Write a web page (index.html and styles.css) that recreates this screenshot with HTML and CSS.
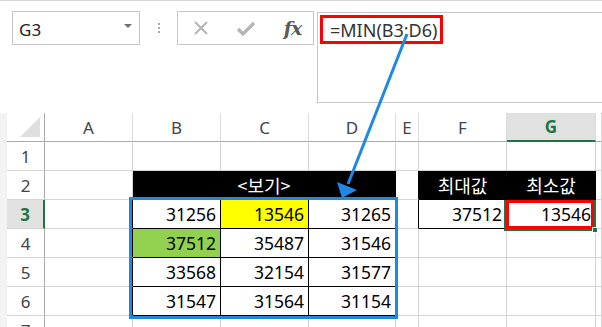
FILE: index.html
```html
<!DOCTYPE html>
<html lang="ko">
<head>
    <meta charset="UTF-8">
    <title>MIN 함수</title>
    <link rel="stylesheet" href="styles.css">
</head>
<body>
<div class="app">
    <div class="toolbar">
        <div class="namebox"><span class="name">G3</span><span class="caret"></span></div>
        <div class="grip"><i></i><i></i><i></i></div>
        <div class="fbtns">
            <span class="fbtn">
                <svg width="16" height="16" viewBox="0 0 16 16"><path d="M2 2 L14 14 M14 2 L2 14" stroke="#b4b4b4" stroke-width="2" fill="none"/></svg>
            </span>
            <span class="fbtn">
                <svg width="20" height="16" viewBox="0 0 20 16"><path d="M2 9 L7 14 L18 3" stroke="#b4b4b4" stroke-width="3.2" fill="none"/></svg>
            </span>
            <span class="fbtn fx">fx</span>
        </div>
        <div class="formula">
            <span class="formula-text">=MIN(B3:D6)</span>
        </div>
    </div>

    <div class="sheet-area">
        <div class="edge"></div>
        <div class="sheet">
            <!-- header -->
            <div class="h corner"><span class="tri"></span></div>
            <div class="h">A</div>
            <div class="h">B</div>
            <div class="h">C</div>
            <div class="h">D</div>
            <div class="h">E</div>
            <div class="h">F</div>
            <div class="h h-on">G</div>
            <div class="h"></div>

            <!-- 1 -->
            <div class="rh">1</div>
            <div class="c"></div><div class="c"></div><div class="c"></div><div class="c"></div>
            <div class="c"></div><div class="c"></div><div class="c"></div><div class="c"></div>

            <!-- 2 -->
            <div class="rh">2</div>
            <div class="c"></div>
            <div class="c blk span3">&lt;보기&gt;</div>
            <div class="c bl-r"></div>
            <div class="c blk">최대값</div>
            <div class="c blk">최소값</div>
            <div class="c"></div>

            <!-- 3 -->
            <div class="rh rh-on">3</div>
            <div class="c bl-r"></div>
            <div class="c tb">31256</div>
            <div class="c tb yellow">13546</div>
            <div class="c tb">31265</div>
            <div class="c bl-r"></div>
            <div class="c tb">37512</div>
            <div class="c tb">13546</div>
            <div class="c"></div>

            <!-- 4 -->
            <div class="rh">4</div>
            <div class="c bl-r"></div>
            <div class="c tb green">37512</div>
            <div class="c tb">35487</div>
            <div class="c tb">31546</div>
            <div class="c"></div><div class="c"></div><div class="c"></div><div class="c"></div>

            <!-- 5 -->
            <div class="rh">5</div>
            <div class="c bl-r"></div>
            <div class="c tb">33568</div>
            <div class="c tb">32154</div>
            <div class="c tb">31577</div>
            <div class="c"></div><div class="c"></div><div class="c"></div><div class="c"></div>

            <!-- 6 -->
            <div class="rh">6</div>
            <div class="c bl-r"></div>
            <div class="c tb">31547</div>
            <div class="c tb">31564</div>
            <div class="c tb">31154</div>
            <div class="c"></div><div class="c"></div><div class="c"></div><div class="c"></div>

            <!-- 7 -->
            <div class="rh">7</div>
            <div class="c"></div><div class="c"></div><div class="c"></div><div class="c"></div>
            <div class="c"></div><div class="c"></div><div class="c"></div><div class="c"></div>
        </div>

        <div class="sel"></div>
        <div class="active"></div>
        <div class="mark"></div>
        <div class="handle"></div>
    </div>

    <svg class="arrow" width="602" height="327" viewBox="0 0 602 327">
        <line x1="407" y1="34" x2="348" y2="184" stroke="#1e88e5" stroke-width="3"/>
        <polygon points="342,198 337,182 357,190" fill="#1e88e5"/>
    </svg>
</div>
</body>
</html>
```

FILE: styles.css
```css
* {
    box-sizing: border-box;
}

body {
    margin: 0;
    background: #fff;
    font-family: "Noto Sans", "Noto Sans CJK KR", sans-serif;
    color: #000;
}

.app {
    position: relative;
    width: 602px;
    height: 327px;
    overflow: hidden;
}

/* formula bar */
.toolbar {
    height: 113px;
    border-top: 1px solid #d5d5d5;
    display: flex;
    align-items: flex-start;
    padding: 10px 0 0 12px;
}

.namebox {
    width: 128px;
    height: 34px;
    border: 1px solid #c6c6c6;
    display: flex;
    align-items: center;
    justify-content: space-between;
    padding: 2px 7px 0 6px;
    font-size: 17px;
    color: #222;
}

.caret {
    border-left: 4px solid transparent;
    border-right: 4px solid transparent;
    border-top: 4px solid #707070;
    margin-top: -6px;
}

.grip {
    width: 37px;
    height: 34px;
    display: flex;
    flex-direction: column;
    align-items: center;
    justify-content: center;
    gap: 2px;
}

.grip i {
    width: 2px;
    height: 2px;
    background: #a8a8a8;
}

.fbtns {
    width: 137px;
    height: 34px;
    border: 1px solid #c6c6c6;
    display: flex;
    align-items: center;
}

.fbtn {
    width: 45px;
    display: flex;
    justify-content: center;
    align-items: center;
}

.fx {
    font-family: "DejaVu Serif", "Liberation Serif", serif;
    font-style: italic;
    font-weight: bold;
    font-size: 19px;
    color: #5a5a5a;
    letter-spacing: -1px;
    padding-left: 4px;
}

.formula {
    flex: 1;
    height: 91px;
    margin: 1px 0 0 3px;
    border: 1px solid #c6c6c6;
    border-right: none;
    padding: 2px;
}

.formula-text {
    display: inline-flex;
    align-items: center;
    width: 123px;
    height: 29px;
    border: 3px solid #f00;
    padding-left: 7px;
    font-size: 18px;
    color: #333;
}

/* sheet */
.sheet-area {
    position: relative;
    display: flex;
}

.edge {
    width: 7px;
    background: #f3f3f3;
}

.sheet {
    display: grid;
    grid-template-columns: 38px 88px 88px 88px 87px 23px 88px 89px 6px;
    grid-auto-rows: 29px;
}

.h,
.rh,
.c {
    display: flex;
    align-items: center;
    border-right: 1px solid #d4d4d4;
    border-bottom: 1px solid #d4d4d4;
}

.h {
    justify-content: center;
    font-size: 17px;
    color: #444;
    border-bottom-color: #ababab;
    border-right-color: #dadada;
}

.h-on {
    background: #e1e1e1;
    color: #217346;
    font-weight: bold;
    border-bottom: 2px solid #217346;
}

.corner {
    position: relative;
    border-right-color: #ababab;
}

.tri {
    position: absolute;
    right: 4px;
    bottom: 4px;
    width: 0;
    height: 0;
    border-left: 20px solid transparent;
    border-bottom: 20px solid #dfdfdf;
}

.rh {
    justify-content: center;
    font-size: 17px;
    color: #444;
    border-right-color: #ababab;
}

.rh-on {
    background: #e1e1e1;
    color: #217346;
    font-weight: bold;
    border-right: 2px solid #217346;
}

.c {
    justify-content: flex-end;
    padding-right: 4px;
    font-size: 17.5px;
}

.tb {
    border-right-color: #000;
    border-bottom-color: #000;
}

.bl-r {
    border-right-color: #000;
}

.blk {
    background: #000;
    color: #fff;
    border-color: #000;
    justify-content: center;
    padding-right: 0;
    font-family: "Noto Sans CJK KR", sans-serif;
    font-size: 18px;
}

.span3 {
    grid-column: span 3;
}

.yellow {
    background: #ffff00;
}

.green {
    background: #92d050;
}

/* overlays */
.sel {
    position: absolute;
    left: 129px;
    top: 84px;
    width: 269px;
    height: 122px;
    border: 3px solid #1e88e5;
}

.active {
    position: absolute;
    left: 504px;
    top: 87px;
    width: 92px;
    height: 31px;
    border: 2px solid #217346;
    border-top: none;
}

.mark {
    position: absolute;
    left: 506px;
    top: 87px;
    width: 88px;
    height: 29px;
    border: 3px solid #f00;
}

.handle {
    position: absolute;
    left: 592px;
    top: 114px;
    width: 6px;
    height: 6px;
    background: #217346;
    border: 1px solid #fff;
}

.arrow {
    position: absolute;
    left: 0;
    top: 0;
    pointer-events: none;
}
```
